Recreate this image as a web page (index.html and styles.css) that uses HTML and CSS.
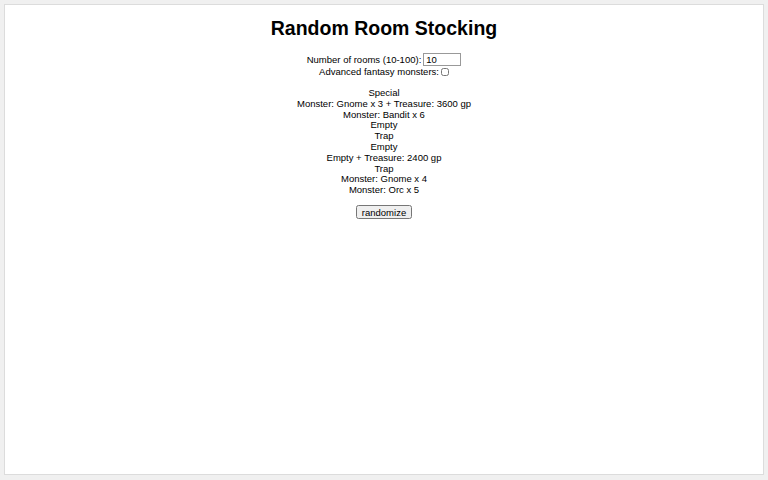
FILE: index.html
```html
<!DOCTYPE html>
<html>
<head>
<meta charset="utf-8">
<link rel="stylesheet" href="styles.css">
</head>
<body>
<div class="panel">
  <h1 class="title">Random Room Stocking</h1>
  <div class="form">
    <div class="row"><label>Number of rooms (10-100): <input class="num" type="text" value="10"></label></div>
    <div class="row"><label>Advanced fantasy monsters: <input class="chk" type="checkbox"></label></div>
  </div>
  <div class="results">
    <div>Special</div>
    <div>Monster: Gnome x 3 + Treasure: 3600 gp</div>
    <div>Monster: Bandit x 6</div>
    <div>Empty</div>
    <div>Trap</div>
    <div>Empty</div>
    <div>Empty + Treasure: 2400 gp</div>
    <div>Trap</div>
    <div>Monster: Gnome x 4</div>
    <div>Monster: Orc x 5</div>
  </div>
  <div class="actions"><button class="btn" type="button">randomize</button></div>
</div>
</body>
</html>
```
FILE: styles.css
```css
html, body {
  margin: 0;
  padding: 0;
}
body {
  background: #f0f0f0;
  padding: 4px 4px 5px 4px;
  font-family: "Liberation Sans", Arial, sans-serif;
  font-size: 9.5px;
  color: #000;
}
.panel {
  background: #fff;
  border: 1px solid #dcdcdc;
  height: 471px;
  box-sizing: border-box;
  text-align: center;
  padding-top: 13px;
}
.title {
  font-size: 19.5px;
  font-weight: bold;
  margin: 0 0 15px 0;
  line-height: 20px;
}
.form {
  line-height: 11px;
}
.row label {
  display: inline-flex;
  align-items: center;
  gap: 2px;
}
.num {
  width: 38px;
  height: 13px;
  box-sizing: border-box;
  border: 1px solid #999;
  font: 9.5px "Liberation Sans", Arial, sans-serif;
  padding: 0 2px;
  margin: 0;
}
.chk {
  width: 8px;
  height: 8px;
  margin: 0;
}
.results {
  margin-top: 11px;
  line-height: 10.8px;
}
.actions {
  margin-top: 9px;
}
.btn {
  font: 9.5px "Liberation Sans", Arial, sans-serif;
  height: 14px;
  padding: 0 4px;
  margin: 0;
}
```
